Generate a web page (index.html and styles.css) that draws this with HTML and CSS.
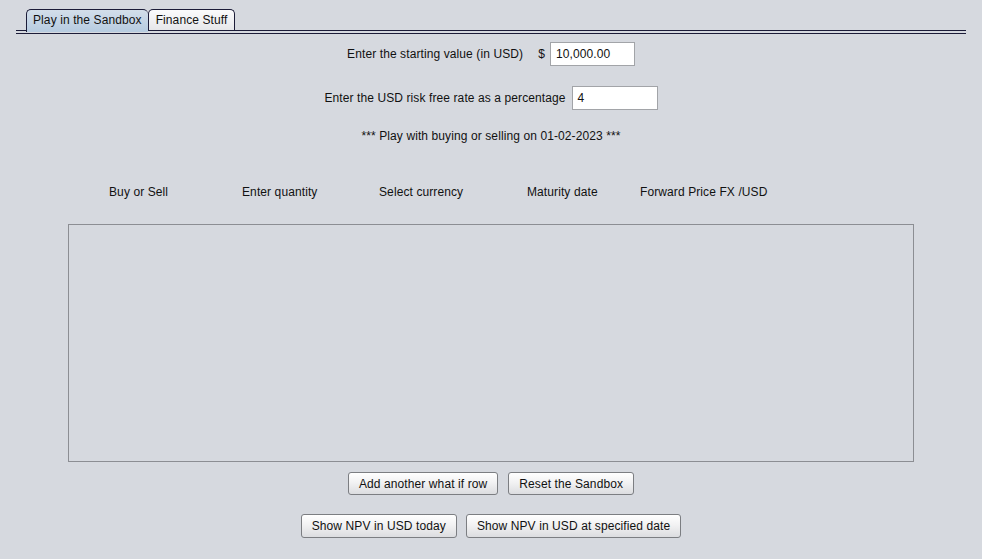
FILE: index.html
```html
<!DOCTYPE html>
<html>
<head>
<meta charset="utf-8">
<link rel="stylesheet" href="styles.css">
</head>
<body>
<div class="tabstrip">
  <div class="tab selected">Play in the Sandbox</div>
  <div class="tab">Finance Stuff</div>
</div>
<div class="rule2"></div>
<div class="content">
  <div class="row row1">
    <span class="label">Enter the starting value (in USD)</span>
    <span class="dollar">$</span>
    <div class="field f1">10,000.00</div>
  </div>
  <div class="row row2">
    <span class="label">Enter the USD risk free rate as a percentage</span>
    <div class="field f2">4</div>
  </div>
  <div class="row row3">*** Play with buying or selling on 01-02-2023 ***</div>
  <div class="headers">
    <span class="h c1">Buy or Sell</span>
    <span class="h c2">Enter quantity</span>
    <span class="h c3">Select currency</span>
    <span class="h c4">Maturity date</span>
    <span class="h c5">Forward Price FX /USD</span>
  </div>
  <div class="box"></div>
  <div class="buttons b1">
    <div class="btn">Add another what if row</div>
    <div class="btn">Reset the Sandbox</div>
  </div>
  <div class="buttons b2">
    <div class="btn">Show NPV in USD today</div>
    <div class="btn">Show NPV in USD at specified date</div>
  </div>
</div>
</body>
</html>
```
FILE: styles.css
```css
html, body {
  margin: 0;
  padding: 0;
  background: #d6d9df;
  width: 982px;
  height: 559px;
  overflow: hidden;
  font-family: "Liberation Sans", Arial, sans-serif;
  font-size: 12px;
  letter-spacing: 0.1px;
  color: #111;
}
.tabstrip {
  margin: 9px 16px 0 16px;
  padding-left: 10px;
  height: 21px;
  display: flex;
  border-bottom: 1px solid #1c1c38;
}
.tab {
  height: 20px;
  padding: 0 7px;
  border: 1px solid #1c1c38;
  border-bottom: none;
  border-radius: 5px 5px 0 0;
  display: flex;
  align-items: center;
  background: linear-gradient(#fbfbfc, #e6e7ea);
  color: #111;
}
.tab.selected {
  padding: 0 6px 2px 6px;
  height: 23px;
  margin-bottom: -3px;
  border-right: none;
  background: linear-gradient(#d3deea, #b6cbe0);
  position: relative;
  z-index: 1;
  box-sizing: border-box;
}
.tab.selected + .tab {
  border-left: 1px solid #1c1c38;
}
.rule2 {
  margin: 2px 16px 0 16px;
  height: 1px;
  background: #1c1c38;
}
.content {
  display: flex;
  flex-direction: column;
  align-items: center;
}
.row {
  height: 24px;
  display: flex;
  align-items: center;
  justify-content: center;
}
.row1 { margin-top: 8px; }
.row2 { margin-top: 20px; }
.row3 { margin-top: 14px; }
.dollar { margin-left: 15px; margin-right: 5px; }
.row2 .label { margin-right: 6px; }
.field {
  height: 24px;
  box-sizing: border-box;
  border: 1px solid #a2a4a8;
  background: #fff;
  padding-left: 5px;
  display: flex;
  align-items: center;
}
.f1 { width: 85px; }
.f2 { width: 86px; }
.headers {
  align-self: stretch;
  margin-top: 32px;
  height: 24px;
  padding-left: 109px;
  display: flex;
  align-items: center;
}
.c1 { width: 133px; }
.c2 { width: 137px; }
.c3 { width: 148px; }
.c4 { width: 113px; }
.box {
  margin-top: 20px;
  width: 846px;
  height: 238px;
  box-sizing: border-box;
  border: 1px solid #8c8e93;
}
.buttons {
  display: flex;
  justify-content: center;
}
.b1 { margin-top: 10px; gap: 10px; }
.b2 { margin-top: 19px; gap: 9px; }
.btn {
  height: 24px;
  box-sizing: border-box;
  padding: 0 10px;
  border: 1px solid #7c7e82;
  border-radius: 3px;
  background: linear-gradient(#ffffff, #f2f2f3 45%, #dcdde0);
  display: flex;
  align-items: center;
  color: #111;
}
.b1 .btn { height: 23px; }
```
